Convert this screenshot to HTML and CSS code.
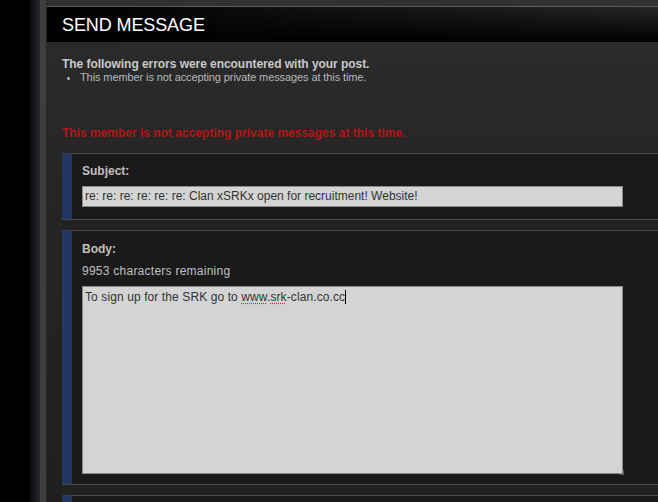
FILE: index.html
```html
<!DOCTYPE html>
<html>
<head>
<meta charset="utf-8">
<link rel="stylesheet" href="styles.css">
</head>
<body>
<div class="page">
  <div class="gutter"></div>
  <div class="shade"></div>
  <div class="rail"></div>
  <div class="main">
    <div class="topbar"></div>
    <div class="header"><h1 class="title">SEND MESSAGE</h1></div>
    <div class="content">
      <div class="errors">
        <p class="errors-title">The following errors were encountered with your post.</p>
        <ul class="errors-list">
          <li>This member is not accepting private messages at this time.</li>
        </ul>
      </div>
      <p class="alert">This member is not accepting private messages at this time.</p>
      <div class="block block-subject">
        <label class="label">Subject:</label>
        <div class="input">re: re: re: re: re: re: Clan xSRKx open for recruitment! Website!</div>
      </div>
      <div class="sep"></div>
      <div class="block block-body">
        <label class="label">Body:</label>
        <div class="remaining">9953 characters remaining</div>
        <div class="textarea">To sign up for the SRK go to <span class="spell">www</span>.<span class="spell">srk</span>-clan.co.cc<span class="caret"></span><span class="grip"></span></div>
      </div>
      <div class="sep"></div>
      <div class="block block-next"></div>
    </div>
  </div>
</div>
</body>
</html>
```

FILE: styles.css
```css
* { box-sizing: border-box; }
html, body { margin: 0; padding: 0; background: #000; }
body { font-family: "Liberation Sans", Arial, sans-serif; }

.page { display: flex; width: 658px; height: 502px; overflow: hidden; }
.gutter { width: 29px; background: #000; flex: none; }
.shade { width: 11px; flex: none; background: linear-gradient(to right, #050607, #1b1d20 60%, #26282b); }
.rail { width: 7px; flex: none; background: #3e3e3e; border-right: 1px solid #2a2a2a; }
.main { flex: 1; background: linear-gradient(to bottom, #2c2c2c, #252525 200px, #1f1f1f); display: flex; flex-direction: column; }

.topbar { height: 7px; background: #313131; border-bottom: 1px solid #5c5c5c; flex: none; }
.header {
  height: 35px; flex: none;
  background: linear-gradient(to right, #000 0%, rgba(0,0,0,0.6) 40%, rgba(0,0,0,0) 100%), linear-gradient(to bottom, #262626, #000);
  padding-left: 15px; display: flex; align-items: center;
}
.title { margin: 0; font-size: 18px; font-weight: normal; color: #fff; letter-spacing: -0.1px; line-height: 1; padding-top: 1px; }

.content { padding-left: 15px; flex: 1; }
.errors { padding-top: 15px; }
.errors-title { margin: 0; font-size: 12px; font-weight: bold; color: #c8c8c8; line-height: 14px; letter-spacing: -0.05px; }
.errors-list { margin: 0; padding-left: 18px; font-size: 11px; color: #b8b8b8; line-height: 13px; letter-spacing: -0.1px; }
.errors-list li { list-style: disc; }
.alert { margin: 42px 0 0; font-size: 12px; font-weight: bold; color: #b51515; line-height: 14px; height: 27px; }

.block { background: #1a1a1a; border-top: 1px solid #4b4b4b; border-left: 10px solid #223862; padding-left: 10px; }
.block-subject { height: 66px; padding-top: 10px; }
.block-body { height: 254px; padding-top: 11px; }
.block-next { height: 20px; }
.sep { height: 11px; background: #222; border-top: 1px solid #4b4b4b; }

.label { display: block; font-size: 12px; font-weight: bold; color: #c0c0c0; line-height: 14px; }
.input {
  margin-top: 8px; width: 541px; height: 21px;
  background: #d4d4d4; border: 1px solid #8a8a8a;
  font-size: 12px; color: #333; line-height: 19px; padding-left: 2px; white-space: nowrap;
}
.remaining { margin-top: 8px; font-size: 12px; color: #c0c0c0; line-height: 14px; letter-spacing: 0.25px; }
.textarea {
  position: relative; margin-top: 8px; width: 541px; height: 188px;
  background: #d4d4d4; border: 1px solid #8a8a8a;
  font-size: 12px; color: #333; line-height: 16px; padding: 2px 2px; letter-spacing: 0.1px;
}
.spell { text-decoration: underline dotted #d22; text-underline-offset: 2px; }
.caret { display: inline-block; width: 1px; height: 14px; background: #000; vertical-align: -3px; }
.grip { position: absolute; right: -2px; bottom: -2px; width: 5px; height: 5px; border-right: 1px solid #555; border-bottom: 1px solid #555; }
```
